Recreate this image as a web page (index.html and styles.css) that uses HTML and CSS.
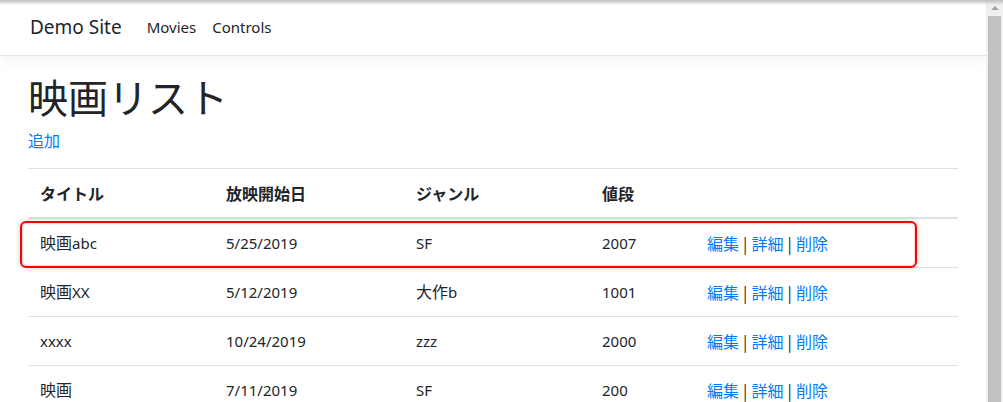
FILE: index.html
```html
<!DOCTYPE html>
<html lang="ja">
<head>
<meta charset="utf-8">
<title>映画リスト - Demo Site</title>
<link rel="stylesheet" href="styles.css">
</head>
<body>
<div class="window">
  <div class="page">
    <header class="navbar">
      <div class="container nav-inner">
        <a class="brand" href="#">Demo Site</a>
        <nav class="nav-links">
          <a class="nav-link" href="#">Movies</a>
          <a class="nav-link" href="#">Controls</a>
        </nav>
      </div>
    </header>
    <main class="container main">
      <h1 class="title">映画リスト</h1>
      <p class="add"><a href="#">追加</a></p>
      <div class="table-wrap">
        <table class="table">
          <colgroup>
            <col class="c1"><col class="c2"><col class="c3"><col class="c4"><col class="c5">
          </colgroup>
          <thead>
            <tr><th>タイトル</th><th>放映開始日</th><th>ジャンル</th><th>値段</th><th></th></tr>
          </thead>
          <tbody>
            <tr><td><span class="ja">映画</span>abc</td><td>5/25/2019</td><td>SF</td><td>2007</td><td class="actions"><a href="#">編集</a> | <a href="#">詳細</a> | <a href="#">削除</a></td></tr>
            <tr><td><span class="ja">映画</span>XX</td><td>5/12/2019</td><td><span class="ja">大作</span>b</td><td>1001</td><td class="actions"><a href="#">編集</a> | <a href="#">詳細</a> | <a href="#">削除</a></td></tr>
            <tr><td>xxxx</td><td>10/24/2019</td><td>zzz</td><td>2000</td><td class="actions"><a href="#">編集</a> | <a href="#">詳細</a> | <a href="#">削除</a></td></tr>
            <tr><td><span class="ja">映画</span></td><td>7/11/2019</td><td>SF</td><td>200</td><td class="actions"><a href="#">編集</a> | <a href="#">詳細</a> | <a href="#">削除</a></td></tr>
          </tbody>
        </table>
        <div class="highlight"></div>
      </div>
    </main>
  </div>
  <div class="scrollbar">
    <div class="arrow"></div>
    <div class="thumb"></div>
  </div>
</div>
</body>
</html>
```
FILE: styles.css
```css
html, body {
  margin: 0;
  padding: 0;
  height: 100%;
  overflow: hidden;
}
body {
  font-family: "Noto Sans", "Noto Sans CJK JP", sans-serif;
  font-size: 16px;
  line-height: 1.5;
  color: #212529;
  background: #fff;
}
a { color: #007bff; text-decoration: none; }

.window {
  display: flex;
  height: 402px;
  position: relative;
}
.window::before {
  content: "";
  position: absolute;
  left: 0; right: 0; top: 0;
  height: 5px;
  background: linear-gradient(#bdbdbd, rgba(255,255,255,0));
  z-index: 5;
}
.page {
  flex: 1;
  overflow: hidden;
}
.container {
  width: 960px;
  margin: 0 auto;
  padding: 0 15px;
  box-sizing: border-box;
}
.navbar {
  height: 55px;
  border-bottom: 1px solid #e5e5e5;
  box-shadow: 0 4px 12px rgba(0,0,0,0.05);
  background: #fff;
  margin-bottom: 16px;
  box-sizing: content-box;
}
.nav-inner {
  display: flex;
  align-items: center;
  height: 55px;
}
.brand {
  color: #212529;
  font-size: 19px;
  margin-left: 2px;
  margin-right: 25px;
}
.nav-links {
  display: flex;
  gap: 16px;
}
.nav-link {
  color: #212529;
  font-size: 15px;
}

.title {
  font-family: "Noto Sans CJK JP", sans-serif;
  font-weight: 400;
  font-size: 40px;
  line-height: 48px;
  margin: 0 0 8px;
}
.add {
  margin: 0 0 16px;
  font-family: "Noto Sans CJK JP", sans-serif;
}

.table-wrap { position: relative; }
.table {
  width: 100%;
  border-collapse: collapse;
  table-layout: fixed;
}
.c1 { width: 186px; }
.c2 { width: 190px; }
.c3 { width: 186px; }
.c4 { width: 105px; }
.table th, .table td {
  padding: 12px;
  height: 24px;
  border-top: 1px solid #dee2e6;
  text-align: left;
  vertical-align: top;
  font-size: 15px;
  line-height: 24px;
  white-space: nowrap;
}
.table th {
  font-family: "Noto Sans CJK JP", sans-serif;
  font-size: 16px;
  font-weight: 700;
  border-bottom: 2px solid #dee2e6;
}
.ja {
  font-family: "Noto Sans CJK JP", sans-serif;
  font-size: 16px;
  line-height: 1;
}
.table td.actions {
  color: #212529;
  font-family: "Noto Sans CJK JP", sans-serif;
  font-size: 16px;
  word-spacing: 0.5px;
}

.highlight {
  position: absolute;
  left: -8px;
  top: 53px;
  width: 893px;
  height: 43px;
  border: 2px solid #f00;
  border-radius: 6px;
  box-shadow: 0 0 6px rgba(0,0,0,0.18), inset 0 0 2px rgba(255,0,0,0.5);
  pointer-events: none;
}

.scrollbar {
  width: 17px;
  background: #f0f0f0;
  display: flex;
  flex-direction: column;
  align-items: center;
}
.arrow {
  width: 0; height: 0;
  margin-top: 6px;
  border-left: 4px solid transparent;
  border-right: 4px solid transparent;
  border-bottom: 4px solid #a3a3a3;
}
.thumb {
  margin-top: 6px;
  width: 13px;
  flex: 1;
  background: #c1c1c1;
}
```
